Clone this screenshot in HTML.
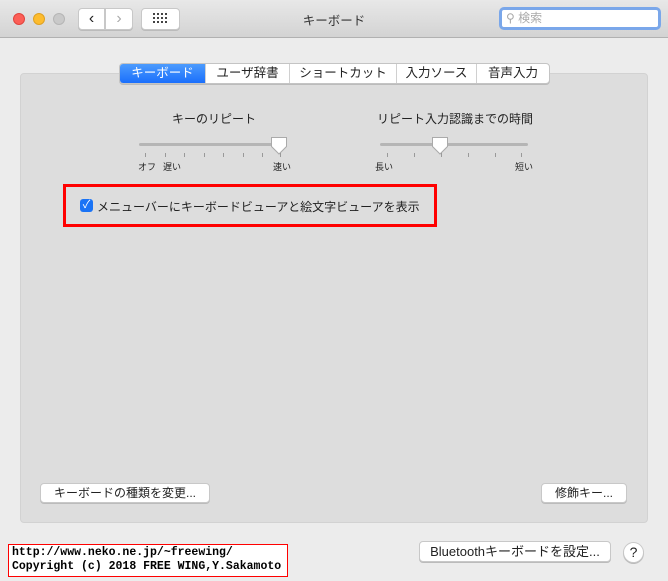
<!DOCTYPE html><html><head><meta charset="utf-8"><style>
*{margin:0;padding:0;box-sizing:border-box}
body{width:668px;height:581px;background:#ececec;font-family:"Liberation Sans","Noto Sans CJK JP",sans-serif;font-size:13px;color:#222;position:relative;overflow:hidden}
.a{position:absolute}
.tb{left:0;top:0;width:668px;height:38px;background:linear-gradient(#e8e8e8,#d3d3d3);border-bottom:1px solid #b1b1b1}
.dot{width:12px;height:12px;border-radius:50%;top:13px}
.btn{background:#fff;border:1px solid #c8c8c8;border-radius:4px;box-shadow:0 1px 0 #bbb;text-align:center;font-size:13px}
.panel{left:20px;top:73px;width:628px;height:450px;background:#dddddd;border:1px solid #d2d2d2;border-radius:4px}
.tabs{left:119px;top:63px;height:21px;display:flex;border:1px solid #c4c4c4;border-radius:4px;background:#fff;overflow:hidden;box-shadow:0 1px 0 #bbb}
.tabs div{height:19px;line-height:19px;text-align:center;border-left:1px solid #d0d0d0;font-size:12.5px}
.track{height:3px;background:#b5b5b5;border-radius:2px}
.tick{width:1px;height:4px;background:#999;top:153px}
.lbl{font-size:9px;top:160px}
</style></head><body>
<div class="a tb"></div>
<div class="a dot" style="left:13px;background:#fc5f57;border:1px solid #e0443e"></div>
<div class="a dot" style="left:33px;background:#fdbc2e;border:1px solid #dea123"></div>
<div class="a dot" style="left:53px;background:#c9c9c9;border:1px solid #b5b5b5"></div>
<div class="a btn" style="left:78px;top:8px;width:27px;height:22px;border-radius:4px 0 0 4px;font-size:16px;line-height:20px">&#8249;</div>
<div class="a btn" style="left:105px;top:8px;width:28px;height:22px;border-radius:0 4px 4px 0;font-size:16px;line-height:20px;color:#aaa">&#8250;</div>
<div class="a btn" style="left:141px;top:8px;width:39px;height:22px"></div>
<svg class="a" style="left:153px;top:13px" width="14" height="12"><g fill="#444"><rect x="0" y="0" width="2" height="2"/><rect x="4" y="0" width="2" height="2"/><rect x="8" y="0" width="2" height="2"/><rect x="12" y="0" width="2" height="2"/><rect x="0" y="4" width="2" height="2"/><rect x="4" y="4" width="2" height="2"/><rect x="8" y="4" width="2" height="2"/><rect x="12" y="4" width="2" height="2"/><rect x="0" y="8" width="2" height="2"/><rect x="4" y="8" width="2" height="2"/><rect x="8" y="8" width="2" height="2"/><rect x="12" y="8" width="2" height="2"/></g></svg>
<div class="a" style="left:0;width:668px;top:10px;text-align:center;font-size:12.5px;color:#333">キーボード</div>
<div class="a" style="left:499px;top:7px;width:162px;height:23px;background:#fff;border:3px solid #7aa7ea;border-radius:5px;font-size:12px;color:#aaa;line-height:17px;padding-left:4px">&#9906;&#xFE0E; 検索</div>
<div class="a panel"></div>
<div class="a tabs">
<div style="width:85px;border:none;background:linear-gradient(#4c9bfd,#1a6ffc);color:#fff">キーボード</div>
<div style="width:84px">ユーザ辞書</div>
<div style="width:107px">ショートカット</div>
<div style="width:80px">入力ソース</div>
<div style="width:73px">音声入力</div>
</div>
<div class="a" style="left:172px;top:110px;font-size:12px">キーのリピート</div>
<div class="a" style="left:377px;top:110px;font-size:12px">リピート入力認識までの時間</div>
<div class="a track" style="left:139px;top:143px;width:142px"></div>
<div class="a track" style="left:380px;top:143px;width:148px"></div>
<svg class="a" style="left:270px;top:136px" width="18" height="20"><path d="M1.5 1.5h15v9l-7.5 7.5l-7.5-7.5z" fill="#fff" stroke="#aaa"/></svg>
<svg class="a" style="left:431px;top:136px" width="18" height="20"><path d="M1.5 1.5h15v9l-7.5 7.5l-7.5-7.5z" fill="#fff" stroke="#aaa"/></svg>
<div class="a tick" style="left:145px"></div><div class="a tick" style="left:165px"></div><div class="a tick" style="left:184px"></div><div class="a tick" style="left:204px"></div><div class="a tick" style="left:223px"></div><div class="a tick" style="left:243px"></div><div class="a tick" style="left:262px"></div><div class="a tick" style="left:280px"></div>
<div class="a tick" style="left:387px"></div><div class="a tick" style="left:414px"></div><div class="a tick" style="left:441px"></div><div class="a tick" style="left:468px"></div><div class="a tick" style="left:495px"></div><div class="a tick" style="left:521px"></div>
<div class="a lbl" style="left:138px">オフ</div><div class="a lbl" style="left:163px">遅い</div><div class="a lbl" style="left:273px">速い</div>
<div class="a lbl" style="left:375px">長い</div><div class="a lbl" style="left:515px">短い</div>
<div class="a" style="left:63px;top:184px;width:374px;height:43px;border:3px solid #f00"></div>
<div class="a" style="left:80px;top:199px;width:13px;height:13px;background:#1a73f5;border-radius:3px;color:#fff;font-size:11px;line-height:13px;text-align:center">✓</div>
<div class="a" style="left:97px;top:198px;font-size:12px">メニューバーにキーボードビューアと絵文字ビューアを表示</div>
<div class="a btn" style="left:40px;top:483px;width:170px;height:20px;line-height:18px;font-size:12px">キーボードの種類を変更...</div>
<div class="a btn" style="left:541px;top:483px;width:86px;height:20px;line-height:18px;font-size:12px">修飾キー...</div>
<div class="a btn" style="left:419px;top:541px;width:192px;height:21px;line-height:19px">Bluetoothキーボードを設定...</div>
<div class="a btn" style="left:623px;top:542px;width:21px;height:21px;border-radius:50%;line-height:19px;font-size:14px">?</div>
<div class="a" style="left:8px;top:544px;width:280px;height:33px;background:#fff;border:1px solid #f00;font-family:'Liberation Mono',monospace;font-size:11.5px;line-height:14px;padding:1px 3px;font-weight:bold;color:#000;white-space:pre">http://www.neko.ne.jp/~freewing/
Copyright (c) 2018 FREE WING,Y.Sakamoto</div>
</body></html>
